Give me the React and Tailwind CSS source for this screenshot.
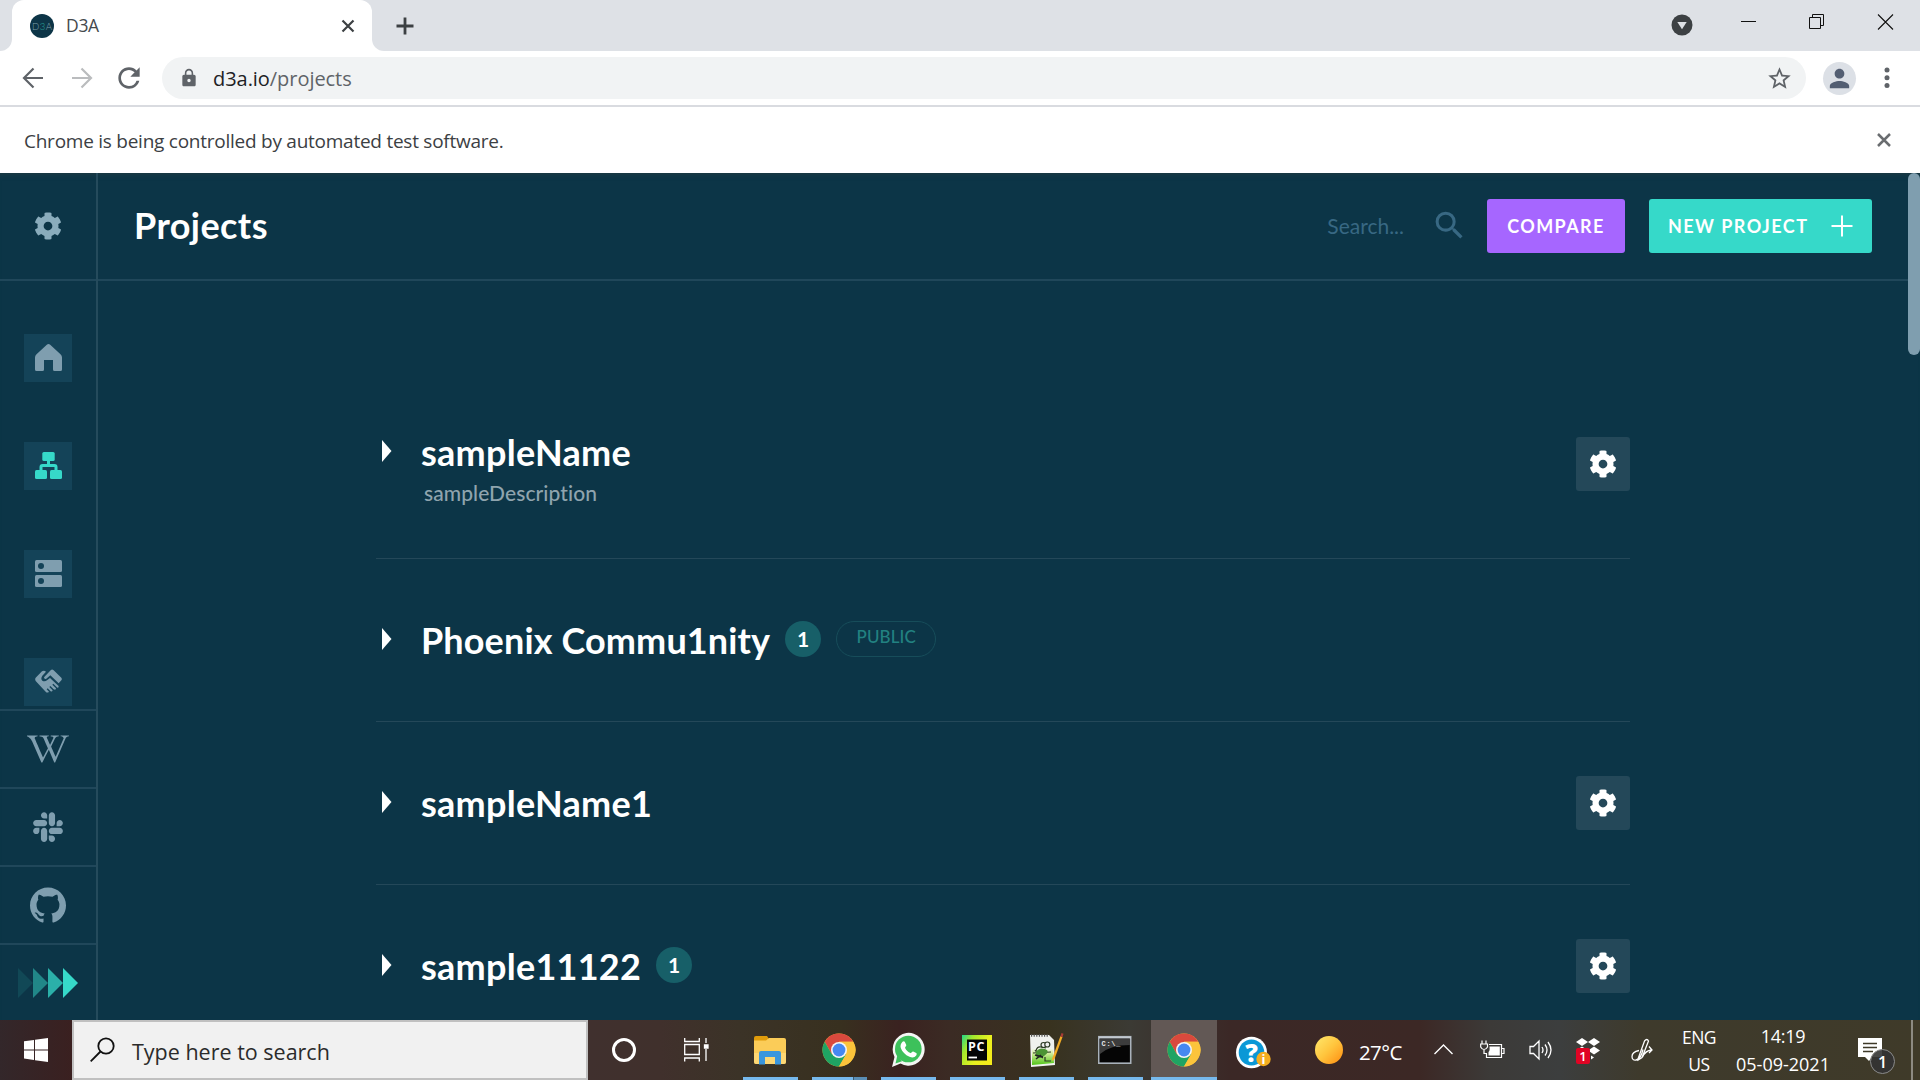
import React from "react";
import { MdRefresh, MdLock, MdStarBorder, MdPerson, MdSearch } from "react-icons/md";
import { FaSlack, FaWikipediaW, FaCog } from "react-icons/fa";
import { SiGithub } from "react-icons/si";

const ui = "font-['Open_Sans','Noto_Sans',sans-serif]";

function BrowserTabs() {
  return (
    <div className="flex h-[51px] bg-[#dee1e6]">
      <div className="flex w-3 items-end bg-white">
        <div className="h-full w-full rounded-br-xl bg-[#dee1e6]" />
      </div>
      <div className="bg-[#dee1e6]">
        <div className="flex h-full w-[360px] items-center rounded-t-xl bg-white pl-[18px] pr-[13px]">
          <svg width="24" height="24" viewBox="0 0 24 24">
            <circle cx="12" cy="12" r="12" fill="#0d3547" />
            <text x="12" y="15.5" fontSize="9.5" textAnchor="middle" textLength="20" fontFamily="Lato, sans-serif" fontWeight="300" fill="#7fa0ab">
              D<tspan fill="#2ba79f">3</tspan>A
            </text>
          </svg>
          <span className="ml-3 flex-1 text-[17.5px] tracking-[-0.3px] text-[#45494d]">D3A</span>
          <svg className="mr-[4px]" width="14" height="14" viewBox="0 0 14 14" stroke="#3c4043" strokeWidth="2.2">
            <path d="M1.5 1.500l11 11M12.500 1.500l-11 11" />
          </svg>
        </div>
      </div>
      <div className="w-3 bg-white">
        <div className="h-full w-full rounded-bl-xl bg-[#dee1e6]" />
      </div>
      <div className="flex flex-1 items-center pl-[10px]">
        <svg width="22" height="22" viewBox="0 0 22 22" stroke="#3c4043" strokeWidth="2.8">
          <path d="M11 2.500v17M2.500 11h17" />
        </svg>
      </div>
      <div className="flex pr-[26px] pt-[11px]">
        <svg className="mt-[3px]" width="22" height="22" viewBox="0 0 22 22">
          <circle cx="11" cy="11" r="10.500" fill="#3c4043" />
          <path d="M6.300 8h9.400L11 15.200z" fill="#dee1e6" />
        </svg>
        <svg className="ml-[47px]" width="18" height="22" viewBox="0 0 18 22">
          <path d="M1 10.500h15" stroke="#111" />
        </svg>
        <svg className="ml-[50px]" width="18" height="22" viewBox="0 0 18 22" fill="none" stroke="#111">
          <path d="M1.500 6.500h11v11h-11zM4.500 6.500v-3h11v11h-3" />
        </svg>
        <svg className="ml-[51px]" width="17" height="22" viewBox="0 0 17 22" stroke="#111" strokeWidth="1.100">
          <path d="M1 3.500l15 15M16 3.500l-15 15" />
        </svg>
      </div>
    </div>
  );
}

function Toolbar() {
  return (
    <div className="flex h-[56px] items-center border-b-2 border-[#d9dbe0] bg-white pl-[22px]">
      <svg width="22" height="22" viewBox="0 0 22 22" fill="none" stroke="#5f6368" strokeWidth="2.200">
        <path d="M21 11H2M11.500 1.500L2 11l9.500 9.500" />
      </svg>
      <svg className="ml-[27px]" width="22" height="22" viewBox="0 0 22 22" fill="none" stroke="#babcbe" strokeWidth="2.200">
        <path d="M1 11h19M10.500 1.500L20 11l-9.500 9.500" />
      </svg>
      <MdRefresh className="ml-[20px] text-[#5f6368]" size={32} />
      <div className="ml-[17px] flex h-[42px] w-[1644px] items-center rounded-full bg-[#f1f3f4] pl-[17px] pr-[13px]">
        <MdLock className="text-[#5f6368]" size={20} />
        <span className="ml-[14px] mt-[1px] flex-1 text-[20px] tracking-[-0.050px] text-[#202124]">
          d3a.io<span className="text-[#5f6368]">/projects</span>
        </span>
        <MdStarBorder className="text-[#5f6368]" size={27} />
      </div>
      <div className="ml-[17px] flex size-[33px] items-center justify-center rounded-full bg-[#dce0e6]">
        <MdPerson className="text-[#535e72]" size={29} />
      </div>
      <svg className="ml-[28px]" width="6" height="22" viewBox="0 0 6 22" fill="#5f6368">
        <circle cx="3" cy="3" r="2.500" />
        <circle cx="3" cy="10.800" r="2.500" />
        <circle cx="3" cy="18.600" r="2.500" />
      </svg>
    </div>
  );
}

function NavBox({ children, active }) {
  return (
    <div className={`flex size-12 shrink-0 items-center justify-center bg-[#144358] pb-[1px] pr-[1px] pl-[0px] ${active ? "text-[#36d9c9]" : "text-[#7f9eaf]"}`}>
      {children}
    </div>
  );
}

function LinkCell({ children }) {
  return (
    <div className="flex h-[78px] shrink-0 items-center justify-center border-t-2 border-[#20475a] text-[#7f9eaf]">{children}</div>
  );
}

function Sidebar() {
  return (
    <div className="flex w-[98px] shrink-0 flex-col overflow-hidden border-r-2 border-[#254b5c]">
      <div className="flex h-[108px] shrink-0 items-center justify-center border-b-2 border-[#20475a] text-[#8aacbc]">
        <FaCog size={28} />
      </div>
      <div className="flex h-[428px] shrink-0 flex-col items-center gap-[60px] overflow-hidden pt-[53px]">
        <NavBox>
          <svg className="ml-[1px]" width="27" height="27" viewBox="0 0 27 27" fill="currentColor">
            <path d="M11.800.7Q13.500-.7 15.200.7L25.500 10.200Q27 11.600 27 13.500V25.500Q27 27 25.500 27H19.500Q18 27 18 25.500V16H9V25.500Q9 27 7.500 27H1.500Q0 27 0 25.500V13.500Q0 11.600 1.500 10.200Z" />
          </svg>
        </NavBox>
        <NavBox active>
          <svg className="ml-[1px]" width="27" height="27" viewBox="0 0 27 27" fill="currentColor">
            <rect x="7.300" y="0" width="12.400" height="9" rx="1.500" />
            <rect x="0" y="18" width="12" height="9" rx="1.500" />
            <rect x="15" y="18" width="12" height="9" rx="1.500" />
            <path d="M13.500 9v4.500M6 18v-3q0-1.500 1.500-1.500h12q1.500 0 1.500 1.500v3" fill="none" stroke="currentColor" strokeWidth="3" />
          </svg>
        </NavBox>
        <NavBox>
          <svg className="ml-[1px]" width="27" height="27" viewBox="0 0 27 27" fill="currentColor">
            <rect width="27" height="12" rx="1.500" />
            <rect y="15" width="27" height="12" rx="1.500" />
            <circle cx="6" cy="6" r="3" fill="#144358" />
            <circle cx="6" cy="21" r="3" fill="#144358" />
          </svg>
        </NavBox>
        <NavBox>
          <svg className="-mt-[1px] ml-[1px]" width="27" height="24" viewBox="0 0 81 72" fill="currentColor">
            <path d="M2 26L21 7Q27 3 33 8L22 20Q16 29 22 35Q29 40 37 33L45 27L70 50Q73 55 67 56L55 44L52 47L63 58Q63 64 56 61L46 51L43 54L53 64Q51 70 46 66L38 58L35 61L42 68Q37 73 32 68L2 36Q-1 31 2 26Z" />
            <path d="M27 25L47 4Q51-1 56 4L79 26Q82 30 79 34L71 43L46 19L33 30Q27 31 27 25Z" />
          </svg>
        </NavBox>
      </div>
      <LinkCell>
        <FaWikipediaW size={42} />
      </LinkCell>
      <LinkCell>
        <FaSlack className="-mt-[1px]" size={34} />
      </LinkCell>
      <LinkCell>
        <SiGithub className="-mt-[1px]" size={36} />
      </LinkCell>
      <LinkCell>
        <svg className="-mt-[1px]" width="60" height="30" viewBox="0 0 60 30" fill="#36d9c9">
          <path d="M0 0l15 15L0 30z" opacity=".12" />
          <path d="M15 0l15 15-15 15z" opacity=".5" />
          <path d="M30 0l15 15-15 15z" opacity=".75" />
          <path d="M45 0l15 15-15 15z" />
        </svg>
      </LinkCell>
    </div>
  );
}

function Header() {
  return (
    <div className="flex h-[108px] shrink-0 items-center border-b-2 border-[#20475a] pl-[36px] pr-[48px]">
      <h1 className="-mt-[2px] flex-1 text-[36px] font-bold leading-none tracking-[0.420px] text-white">Projects</h1>
      <span className="text-[21px] text-[#386883]">Search...</span>
      <MdSearch className="-mt-[2px] ml-[27px] text-[#386883]" size={37} />
      <button className="ml-[19px] h-[54px] w-[138px] rounded-[3px] bg-[#a666ff] text-[18px] font-bold tracking-[1.350px] text-white">COMPARE</button>
      <button className="ml-6 flex h-[54px] w-[223px] items-center rounded-[3px] bg-[#36d9c9] pl-[19px] text-[18px] font-bold tracking-[1.450px] text-white">
        <span className="w-[141px] whitespace-nowrap text-left">NEW PROJECT</span>
        <svg className="ml-[22px]" width="22" height="22" viewBox="0 0 22 22" stroke="#fff" strokeWidth="2">
          <path d="M11 .5v21M.5 11h21" />
        </svg>
      </button>
    </div>
  );
}

function Project({ name, description, count, isPublic, editable }) {
  return (
    <div className={`flex border-b border-[#244859] pl-[6px] ${description ? "h-[181px] pt-[54px]" : "h-[163px] pt-[61px]"}`}>
      <svg className="mt-[8px] shrink-0" width="10" height="22" viewBox="0 0 10 22">
        <path d="M0 0l9.500 11L0 22z" fill="#fff" />
      </svg>
      <div className="-mt-[3px] ml-[29px] flex-1">
        <div className="flex h-[44px] items-center">
          <h2 className={`mt-[2px] text-[36px] font-bold leading-[44px] text-white ${isPublic ? "tracking-[0.130px]" : "tracking-[0.260px]"}`}>{name}</h2>
          {count && (
            <span className="ml-[15px] flex size-9 items-center justify-center rounded-full bg-[#175f68] text-[21px] font-bold text-white">{count}</span>
          )}
          {isPublic && (
            <span className="ml-[15px] flex h-9 w-[100px] items-center justify-center rounded-full border border-[#174d5a] pb-[4px] text-[17px] font-medium tracking-[0.100px] text-[#228181]">
              PUBLIC
            </span>
          )}
        </div>
        {description && <p className="ml-[3px] mt-[7px] text-[21px] font-medium leading-[26px] tracking-[0.080px] text-[#8fa4ae]">{description}</p>}
      </div>
      {editable && (
        <div className={`flex size-[54px] items-center justify-center rounded-[3px] bg-[#244859] text-white ${description ? "mt-[5px]" : "-mt-[7px]"}`}>
          <FaCog size={28} />
        </div>
      )}
    </div>
  );
}

function ProjectList() {
  return (
    <div className="ml-[278px] w-[1254px] pt-[97px]">
      <Project name="sampleName" description="sampleDescription" editable />
      <Project name="Phoenix Commu1nity" count="1" isPublic />
      <Project name="sampleName1" editable />
      <Project name="sample11122" count="1" editable />
    </div>
  );
}

function Chrome() {
  return (
    <svg width="34" height="36" viewBox="-17 -18 34 36">
      <circle r="16.500" fill="#fbc43b" />
      <path d="M-14.300-8.250A16.500 16.500 0 0 1 14.300-8.250L0-8.250-7.150 4.125Z" fill="#d9493d" />
      <path d="M-14.300-8.250A16.500 16.500 0 0 0 0 16.500L7.150 4.125H-7.150Z" fill="#1fa463" />
      <path d="M14.300-8.250H0L7.150 4.125 0 16.500A16.500 16.500 0 0 0 14.300-8.250Z" fill="#fbc43b" />
      <circle r="8" fill="#f5f5f5" />
      <circle r="6.400" fill="#4688f1" />
    </svg>
  );
}

function Explorer() {
  return (
    <svg width="32" height="30" viewBox="0 0 32 30">
      <path d="M0 3q0-2 2-2h11l2 3v4H0z" fill="#e09c0b" />
      <path d="M0 5.500h12l3-2.500h15q2 0 2 2v22q0 2-2 2H2q-2 0-2-2z" fill="#fbcc58" />
      <path d="M0 18h32v9q0 2-2 2H2q-2 0-2-2z" fill="#fddb80" opacity=".7" />
      <path d="M5 29.500V18q0-2 2-2h18q2 0 2 2v11.500h-6V22H11v7.500z" fill="#3a96dd" />
    </svg>
  );
}

function WhatsApp() {
  return (
    <svg width="34" height="36" viewBox="0 0 34 36">
      <path d="M1 35l2.500-10A16 16.500 0 1 1 9.500 31.500z" fill="#f4f6f4" />
      <circle cx="17.300" cy="17" r="13.300" fill="#3dc15b" />
      <path d="M4.500 31.500l1.800-8 4.700 5.800z" fill="#3dc15b" />
      <path d="M11.500 9.800c.9-.9 2-.6 2.400.2l1.400 3.100c.3.800-1.500 2.300-1.200 2.900 1.200 2.500 2.900 4 5.400 5.100.8.300 1.800-1.900 2.700-1.500l3 1.500c.8.500.6 1.600 0 2.500-1.600 2.300-4.200 2.300-6.700 1.200-4.300-1.700-7.400-5-8.700-8.700-.7-2.200-.1-4.500 1.700-6.300z" fill="#fff" />
    </svg>
  );
}

function PyCharm() {
  return (
    <svg width="30" height="32" viewBox="0 0 30 32">
      <defs>
        <linearGradient id="pc" x1="0" y1="0" x2="1" y2="0.6">
          <stop offset="0" stopColor="#21d789" />
          <stop offset=".3" stopColor="#a4e82c" />
          <stop offset=".7" stopColor="#e8f120" />
          <stop offset="1" stopColor="#f4ec1c" />
        </linearGradient>
      </defs>
      <rect y="1" width="30" height="30" fill="url(#pc)" />
      <rect x="5" y="5.500" width="20" height="21" fill="#050505" />
      <text x="6" y="16.500" fontSize="12.500" fontWeight="700" textLength="16.500" fontFamily="Open Sans, sans-serif" fill="#fff">PC</text>
      <path d="M6.500 23.500h8.500" stroke="#fff" strokeWidth="1.800" />
    </svg>
  );
}

function NotepadPlus() {
  return (
    <svg width="36" height="36" viewBox="0 0 36 36">
      <defs>
        <linearGradient id="npp" x1="0" y1="0" x2="0" y2="1">
          <stop offset="0" stopColor="#f6f7f3" />
          <stop offset=".3" stopColor="#d5eda0" />
          <stop offset="1" stopColor="#4fc415" />
        </linearGradient>
      </defs>
      <path d="M2 3h19l5 5 1 25L3 35z" fill="#f0f1ee" />
      <path d="M4 17l21-1 1 15-22 2z" fill="url(#npp)" />
      <path d="M3 3.500h18" stroke="#555" strokeWidth="2.500" strokeDasharray="1.200 1.400" />
      <g fill="none" stroke="#2c3a24" strokeWidth="1.200">
        <circle cx="15.500" cy="13" r="2.500" fill="#eee" />
        <circle cx="19.300" cy="12.500" r="2.500" fill="#eee" />
        <path d="M8 19q1-5 5-4l5 1M5 21l18-1M17 25v4h6" />
        <path d="M7 18q4 6 8 8" />
      </g>
      <path d="M8 20q3-5 9-3t-1 7-8-1z" fill="#4c9434" />
      <path d="M7 23l8 2M8 27l5-4" stroke="#222" strokeWidth="1.500" />
      <path d="M24 27L32.500 4l2 1L26.500 27l-2.500 2z" fill="#f3ac24" />
      <path d="M32.300 4.500L33.500 1l2 .8-1 3.500z" fill="#a83c35" />
    </svg>
  );
}

function Terminal() {
  return (
    <svg width="34" height="30" viewBox="0 0 34 30">
      <rect x=".7" y="1.700" width="32" height="26.500" fill="#050505" stroke="#a9b2bb" strokeWidth="1.600" />
      <path d="M1 2.500h32" stroke="#c2c9cf" strokeWidth="2" />
      <path d="M2 4h30v6Q12 10 2 19z" fill="#3c3c3c" />
      <text x="3.500" y="11" fontSize="7" textLength="19" fontFamily="Liberation Mono, monospace" fontWeight="700" fill="#e8e8e8">C:\_</text>
    </svg>
  );
}

function Help() {
  return (
    <svg width="38" height="40" viewBox="0 -2 38 40" className="overflow-visible">
      <ellipse cx="16.500" cy="17.500" rx="15.500" ry="15.800" fill="#fff" />
      <ellipse cx="16.500" cy="17.500" rx="12.800" ry="13" fill="#0a98d6" />
      <text x="16.500" y="26.500" fontSize="25" fontWeight="800" textAnchor="middle" fontFamily="Open Sans, sans-serif" fill="#fff">?</text>
      <circle cx="28.500" cy="24" r="7.200" fill="#f5ae1f" />
      <text x="28.500" y="29" fontSize="13" fontWeight="700" textAnchor="middle" fontFamily="Open Sans, sans-serif" fill="#fff">i</text>
    </svg>
  );
}

function TaskApp({ children, split }) {
  return (
    <div className="flex w-[69px] flex-col items-center">
      <div className="flex flex-1 items-center pr-[2px] pt-[2px]">{children}</div>
      <div className="flex h-[3px] w-[55px] justify-end bg-[#76b9ed]">{split && <div className="w-[14px] border-l border-[#3d5a6c] bg-[#5a8eb5]" />}</div>
    </div>
  );
}

function Taskbar() {
  return (
    <div
      className={`flex h-[60px] text-white ${ui} bg-[linear-gradient(90deg,#33272a_0px,#3a2020_72px,#40302e_588px,#40302c_660px,#3b3327_740px,#38301f_840px,#3a2220_900px,#3b2b24_950px,#38321f_1050px,#3b3a34_1130px,#3b2826_1230px,#3c2825_1420px,#3c3a38_1490px,#3c3e3e_1560px,#3e3a2c_1640px,#3f3a29_1920px)]`}
    >
      <div className="flex w-[72px] items-center justify-center">
        <svg width="24" height="24" viewBox="0 0 24 24" fill="#fff">
          <path d="M0 3.300L10 1.900v9.500H0zM11 1.700L24 0v11.400H11zM0 12.400h10v9.500L0 20.600zM11 12.400h13V24l-13-1.800z" />
        </svg>
      </div>
      <div className="flex w-[516px] items-center border-2 border-[#c0c0c0] bg-[#f1f1f1] pl-4 text-[21.500px] text-[#2b2b2b]">
        <svg className="mb-[1px]" width="25" height="25" viewBox="0 0 25 25" fill="none" stroke="#111" strokeWidth="1.800">
          <circle cx="16" cy="9" r="7.700" />
          <path d="M10.500 14.500L.7 24.300" />
        </svg>
        <span className="ml-[17px] mt-[4px]">Type here to search</span>
      </div>
      <div className="flex w-[72px] items-center justify-center">
        <div className="size-6 rounded-full border-[3px] border-white" />
      </div>
      <div className="flex w-[76px] items-center pl-6">
        <svg width="25" height="24" viewBox="0 0 25 24" fill="none" stroke="#fff" strokeWidth="1.300">
          <path d="M.7 0v3.500h14.600V0M.7 6.500h14.600v10H.7zM.7 23.500V20h14.600v3.500M22 0v5M22 11v12" />
          <path d="M20.500 7h3.500v3h-3.500z" fill="#fff" />
        </svg>
      </div>
      <TaskApp><Explorer /></TaskApp>
      <TaskApp split><Chrome /></TaskApp>
      <TaskApp><WhatsApp /></TaskApp>
      <TaskApp><PyCharm /></TaskApp>
      <TaskApp><NotepadPlus /></TaskApp>
      <TaskApp><Terminal /></TaskApp>
      <div className="ml-[1px] flex w-[66px] flex-col items-center bg-[#625855]">
        <div className="flex flex-1 items-center pt-[2px]"><Chrome /></div>
        <div className="h-[3px] w-full bg-[#76b9ed]" />
      </div>
      <div className="flex w-[98px] items-center pl-[18px] pt-[5px]"><Help /></div>
      <div className="mt-4 size-7 rounded-full bg-linear-to-br from-[#ffe96b] via-[#ffc53d] to-[#ff8a00]" />
      <span className="ml-4 mt-[18px] w-[75px] text-[20.500px] leading-[28px] tracking-[-0.600px]">27°C</span>
      <svg className="mt-6" width="19" height="11" viewBox="0 0 19 11" fill="none" stroke="#fff" strokeWidth="1.400">
        <path d="M.5 10l9-9 9 9" />
      </svg>
      <svg className="ml-[27px] mt-[20px]" width="25" height="20" viewBox="0 0 25 20" fill="none" stroke="#fff" strokeWidth="1.200">
        <path d="M9 4.500h12.500v13H6.500v-4M22 8.500h2v5h-2" />
        <path d="M9.500 6.500h10.300v9H8.500V12q1.500-1 1-5.500z" fill="#fff" stroke="none" />
        <path d="M2 .5v3M6 .5v3M.7 4h6.800v3Q6 9.500 4 9.500T.7 7zM4 9.500v4h3" />
      </svg>
      <svg className="ml-[24px] mt-[19px]" width="24" height="22" viewBox="0 0 24 22" fill="none" stroke="#fff" strokeWidth="1.300">
        <path d="M1 7.500h3.500L10 2v18l-5.500-5.500H1zM13 8q2 3 0 6M16 5.500q4 5.500 0 11M19 3q6 8 0 16" />
      </svg>
      <div className="relative ml-[23px] mt-[18px] h-6 w-6">
        <svg width="24" height="22" viewBox="0 0 24 22" fill="#fff">
          <path d="M6 0l6 4-6 4-6-4zM18 0l6 4-6 4-6-4zM18 8.500l6 4-6 4-6-4zM6 8.500l6 4-6 4-6-4zM15 17.500l3 2-3 2z" />
        </svg>
        <span className="absolute left-0 top-[10px] flex h-[16px] w-[14px] items-center justify-center rounded-[2px] bg-[#e00424] text-[13px] font-semibold leading-none">1</span>
      </div>
      <svg className="ml-[31px] mt-[18px]" width="22" height="24" viewBox="0 0 22 24" fill="none" stroke="#fff" strokeWidth="1.300">
        <path d="M7 21L13.500 3q2.500-3 4 0L11 19.500 7 22zM8 12.500Q1 14 1 18.500q0 4 4 3.500Q10 21 12 11.500M11.500 19q3-6.500 9-7M18 8.500l3 3.500-3 3" />
      </svg>
      <div className="ml-[19px] flex w-[54px] flex-col items-center pt-[4px] text-[17.500px] leading-[27px] tracking-[-0.500px]">
        <span>ENG</span>
        <span>US</span>
      </div>
      <div className="ml-[7px] flex w-[100px] flex-col items-center pt-[3px] text-[18px] leading-[27px]">
        <span className="tracking-[-0.300px]">14:19</span>
        <span className="mt-[1px] tracking-[0px]">05-09-2021</span>
      </div>
      <div className="relative ml-[25px] mt-[18px] h-[38px] w-[40px]">
        <svg width="24" height="24" viewBox="0 0 24 24">
          <path d="M0 0h24v19H14l-3 4-4-4H0z" fill="#fff" />
          <path d="M5 5.500h14M5 9.500h14M5 13.500h10" stroke="#3f3a29" strokeWidth="1.400" />
        </svg>
        <span className="absolute left-3 top-[11px] flex size-[25px] items-center justify-center rounded-full border border-[#8b8b8b] bg-[#333]/90 text-[16px] font-semibold leading-none">1</span>
      </div>
      <div className="ml-[13px] w-[2px] bg-[#8d8a82]" />
    </div>
  );
}

export default function App() {
  return (
    <div className="flex h-[1080px] w-[1920px] flex-col overflow-hidden">
      <div className={ui}>
        <BrowserTabs />
        <Toolbar />
        <div className="flex h-[66px] items-center justify-between bg-white pl-6 pr-[29px]">
          <span className="mt-[3px] text-[19px] tracking-[-0.250px] text-[#3c4043]">Chrome is being controlled by automated test software.</span>
          <svg width="14" height="14" viewBox="0 0 14 14" stroke="#6a6d70" strokeWidth="2.500">
            <path d="M1 1l12 12M13 1L1 13" />
          </svg>
        </div>
      </div>
      <div className="flex h-[847px] bg-[#0c3547] font-['Lato',sans-serif] shadow-[inset_0_6px_5px_-4px_#1c3a43]">
        <Sidebar />
        <div className="flex flex-1 flex-col overflow-hidden">
          <Header />
          <ProjectList />
        </div>
        <div className="-ml-3 h-[182px] w-3 rounded-full bg-[#7f9eaf]" />
      </div>
      <Taskbar />
    </div>
  );
}
